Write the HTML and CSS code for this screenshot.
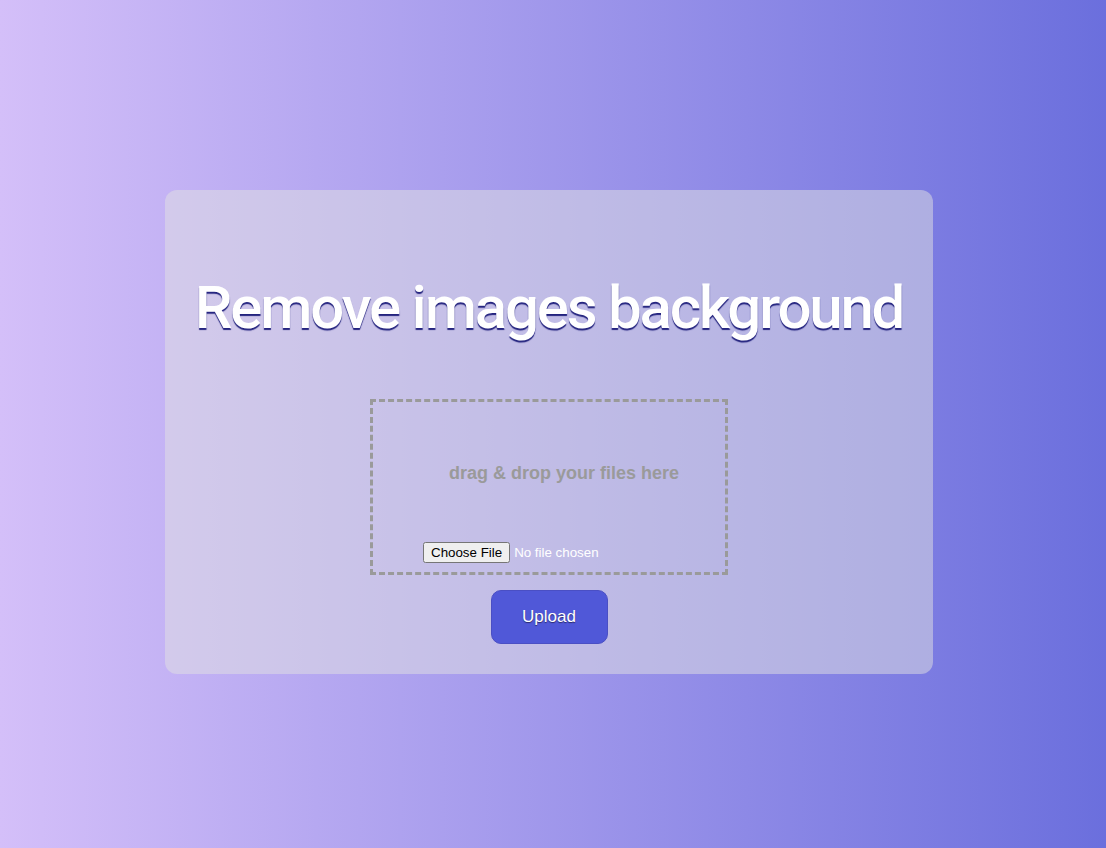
FILE: index.html
```html
<!DOCTYPE html>
<html>
<head>
<meta charset="utf-8">
<link rel="stylesheet" href="styles.css">
</head>
<body>
<main class="page">
  <section class="card">
    <h1 class="title">Remove images background</h1>
    <form class="form">
      <label class="drop">
        <p class="drop-text">drag &amp; drop your files here</p>
        <input class="file" type="file">
      </label>
      <button class="upload" type="button">Upload</button>
    </form>
  </section>
</main>
</body>
</html>
```
FILE: styles.css
```css
html, body {
  margin: 0;
  padding: 0;
  height: 100%;
}
body {
  background: linear-gradient(to right, #d4bff9, #6b6fdd);
  font-family: "Liberation Sans", Arial, sans-serif;
}
.page {
  height: 848px;
  display: flex;
  justify-content: center;
  padding-top: 190px;
  box-sizing: border-box;
}
.card {
  width: 768px;
  height: 484px;
  margin-right: 8px;
  background: rgba(225, 225, 225, 0.5);
  border-radius: 12px;
  display: flex;
  flex-direction: column;
  align-items: center;
  box-sizing: border-box;
}
.title {
  font-family: Roboto, sans-serif;
  font-weight: 500;
  font-size: 60px;
  letter-spacing: -2.2px;
  color: #fff;
  margin: 83px 0 0;
  line-height: 70px;
  text-shadow: 0 2px 1px #23237e;
}
.form {
  display: flex;
  flex-direction: column;
  align-items: center;
  margin-top: 56px;
}
.drop {
  display: block;
  width: 358px;
  height: 176px;
  border: 3px dashed #9a9a9a;
  box-sizing: border-box;
}
.drop-text {
  margin: 61px 0 0 76px;
  font-size: 18px;
  font-weight: bold;
  color: #9a9a9a;
  line-height: 21px;
}
.file {
  margin: 58px 0 0 50px;
  color: #fff;
  font-family: "Liberation Sans", Arial, sans-serif;
  font-size: 13.33px;
}
.upload {
  margin-top: 15px;
  width: 117px;
  height: 54px;
  background: #5058d8;
  border: 1px solid #4a4fc4;
  border-radius: 10px;
  color: #fff;
  font-family: "Liberation Sans", Arial, sans-serif;
  font-size: 17px;
  text-shadow: 0 1px 1px #2a2a6a;
}
```
